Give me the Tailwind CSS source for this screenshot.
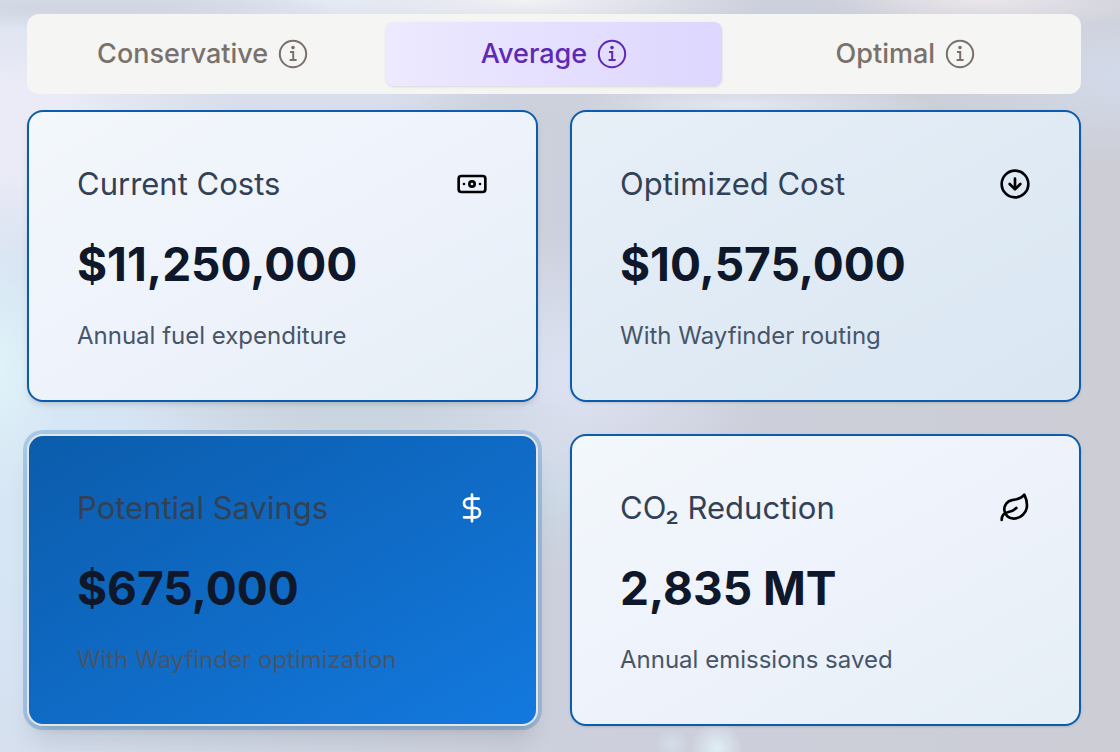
<!DOCTYPE html>
<html lang="en">
<head>
<meta charset="utf-8">
<meta name="viewport" content="width=device-width, initial-scale=1">
<title>Fuel savings</title>
<script src="https://cdn.jsdelivr.net/npm/@tailwindcss/browser@4"></script>
<style>
  .sky {
    background:
      radial-gradient(circle 26px at 64% 99.5%, #e0eef6 0%, #e0eef600 100%),
      radial-gradient(circle 16px at 60% 99%, #d3deea 0%, #d3deea00 100%),
      radial-gradient(ellipse 60px 130px at 0% 49%, #dff2f8 0%, #dff2f800 100%),
      radial-gradient(ellipse 260px 22px at 8% 1%, #d1d6e2 20%, #d1d6e200 100%),
      radial-gradient(ellipse 240px 150px at 0% 17%, #eaebf6 30%, #eaebf600 100%),
      radial-gradient(ellipse 240px 40px at 47% 0%, #f2f2f6 0%, #f2f2f600 100%),
      radial-gradient(ellipse 200px 40px at 28% 0%, #e4eaf5 0%, #e4eaf500 100%),
      radial-gradient(ellipse 160px 24px at 68% 2%, #cbd0dc 20%, #cbd0dc00 100%),
      radial-gradient(ellipse 180px 30px at 88% 0%, #ebe7eb 0%, #ebe7eb00 100%),
      radial-gradient(ellipse 200px 90px at 100% 10%, #d3daea 0%, #d3daea00 100%),
      radial-gradient(ellipse 130px 60px at 48% 16%, #cbd0db 10%, #cbd0db00 100%),
      radial-gradient(ellipse 200px 24px at 66% 14%, #e3e7f2 0%, #e3e7f200 100%),
      radial-gradient(ellipse 260px 30px at 27% 13%, #d8deeb 30%, #d8deeb00 100%),
      radial-gradient(ellipse 220px 40px at 32% 55%, #c9d5df 10%, #c9d5df00 100%),
      radial-gradient(ellipse 200px 150px at 51% 50%, #dce1f1 10%, #dce1f100 100%),
      radial-gradient(ellipse 90px 80px at 49% 65%, #c9d7e4 0%, #c9d7e400 100%),
      radial-gradient(ellipse 300px 320px at 0% 62%, #d6e6f5 30%, #d6e6f500 100%),
      linear-gradient(90deg, #d6dfee 0%, #ccd0dc 50%, #cccdd5 100%);
  }
</style>
</head>
<body class="sky min-h-screen pt-[14px] pr-[39px] pb-[26px] pl-[27px] font-['Inter',sans-serif]">
<svg class="hidden" aria-hidden="true">
  <symbol id="info" viewBox="0 0 30 30" fill="none" stroke="currentColor" stroke-width="2">
    <circle cx="15" cy="15" r="13.2"/>
    <path d="M12 13h3.2v8.1M11.6 21.1h7"/>
    <circle cx="15" cy="8.6" r="1.8" fill="currentColor" stroke="none"/>
  </symbol>
</svg>
<main class="flex flex-col gap-4">
  <div role="tablist" aria-label="Scenario" class="grid grid-cols-3 gap-4 rounded-xl bg-[#f5f5f3] p-2 text-[27px] leading-10 font-medium text-[#79716b]">
    <button type="button" role="tab" aria-selected="false" class="flex h-16 items-center justify-center gap-[10px] rounded-lg">Conservative <svg class="size-[30px]" aria-hidden="true"><use href="#info"/></svg></button>
    <button type="button" role="tab" aria-selected="true" class="flex h-16 items-center justify-center gap-[10px] rounded-lg bg-linear-to-r from-[#ede9fe] to-[#ddd6fe] text-[#5d29b5] shadow-sm">Average <svg class="size-[30px]" aria-hidden="true"><use href="#info"/></svg></button>
    <button type="button" role="tab" aria-selected="false" class="flex h-16 items-center justify-center gap-[10px] rounded-lg">Optimal <svg class="size-[30px]" aria-hidden="true"><use href="#info"/></svg></button>
  </div>
  <div class="grid grid-cols-2 gap-8">
    <section class="flex flex-col gap-6 rounded-2xl border-2 border-[#0b5cad] bg-linear-to-br from-[#f3f8fb] via-[#eef2fb] to-[#e6eff6] p-12 shadow-md">
      <div class="flex items-center justify-between">
        <h2 class="text-[31px] leading-[48px] text-[#334155]">Current Costs</h2>
        <svg class="size-8 text-black" viewBox="0 0 24 24" fill="none" stroke="currentColor" stroke-width="2" stroke-linecap="round" stroke-linejoin="round" aria-hidden="true"><rect width="20" height="12" x="2" y="6" rx="2"/><circle cx="12" cy="12" r="2"/><path d="M6 12h.01M18 12h.01"/></svg>
      </div>
      <p class="text-[46px] leading-[64px] font-bold text-[#0f172a]">$11,250,000</p>
      <p class="text-2xl leading-8 text-[#475569]">Annual fuel expenditure</p>
    </section>
    <section class="flex flex-col gap-6 rounded-2xl border-2 border-[#0b5cad] bg-linear-to-br from-[#e7eff7] to-[#d9e6f2] p-12 shadow-sm">
      <div class="flex items-center justify-between">
        <h2 class="text-[31px] leading-[48px] text-[#334155]">Optimized Cost</h2>
        <svg class="size-8 text-black" viewBox="0 0 24 24" fill="none" stroke="currentColor" stroke-width="2" stroke-linecap="round" stroke-linejoin="round" aria-hidden="true"><circle cx="12" cy="12" r="10"/><path d="M12 8v8M8 12l4 4 4-4"/></svg>
      </div>
      <p class="text-[46px] leading-[64px] font-bold text-[#0f172a]">$10,575,000</p>
      <p class="text-2xl leading-8 text-[#475569]">With Wayfinder routing</p>
    </section>
    <section class="flex flex-col gap-6 rounded-2xl border-2 border-[#e5e5e5] bg-linear-to-br from-[#0b5cab] to-[#1379df] bg-origin-border p-12 shadow-xl ring-4 ring-[#0b6cbd]/25">
      <div class="flex items-center justify-between">
        <h2 class="text-[31px] leading-[48px] text-[#334155]">Potential Savings</h2>
        <svg class="size-8 text-white" viewBox="0 0 24 24" fill="none" stroke="currentColor" stroke-width="2" stroke-linecap="round" stroke-linejoin="round" aria-hidden="true"><path d="M12 2v20M17 5H9.5a3.5 3.5 0 0 0 0 7h5a3.5 3.5 0 0 1 0 7H6"/></svg>
      </div>
      <p class="text-[46px] leading-[64px] font-bold text-[#0f172a]">$675,000</p>
      <p class="text-2xl leading-8 text-[#475569]">With Wayfinder optimization</p>
    </section>
    <section class="flex flex-col gap-6 rounded-2xl border-2 border-[#0b5cad] bg-linear-to-br from-[#f3f8fb] via-[#eef2fb] to-[#e6eff6] p-12 shadow-sm">
      <div class="flex items-center justify-between">
        <h2 class="text-[31px] leading-[48px] text-[#334155]">CO₂ Reduction</h2>
        <svg class="size-8 text-black" viewBox="0 0 24 24" fill="none" stroke="currentColor" stroke-width="2" stroke-linecap="round" stroke-linejoin="round" aria-hidden="true"><path d="M11 20A7 7 0 0 1 9.8 6.1C15.5 5 17 4.48 19 2c1 2 2 4.18 2 8 0 5.5-4.78 10-10 10Z"/><path d="M2 21c0-3 1.85-5.36 5.08-6C9.5 14.52 12 13 13 12"/></svg>
      </div>
      <p class="text-[46px] leading-[64px] font-bold text-[#0f172a]">2,835 MT</p>
      <p class="text-2xl leading-8 text-[#475569]">Annual emissions saved</p>
    </section>
  </div>
</main>
</body>
</html>
